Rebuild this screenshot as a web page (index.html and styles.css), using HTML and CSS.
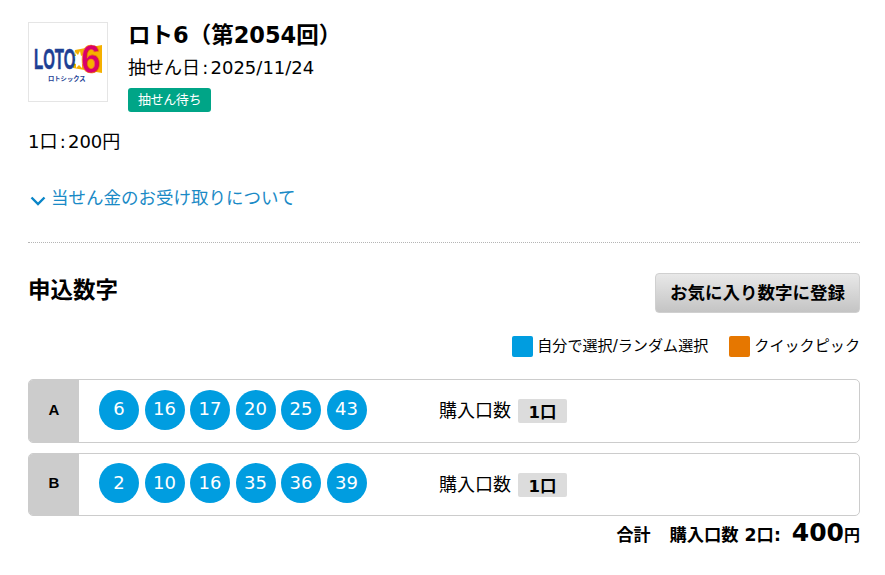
FILE: index.html
```html
<!DOCTYPE html>
<html lang="ja">
<head>
    <meta charset="UTF-8">
    <meta name="viewport" content="width=device-width, initial-scale=1.0">
    <title>ロト6 申込内容</title>
    <link rel="stylesheet" href="styles.css">
</head>
<body>
    <div class="page">
        <!-- くじ情報 -->
        <div class="lot-head">
            <div class="lot-logo">
                <svg width="68" height="48" viewBox="0 -5 68 48">
                    <polygon points="41,7 68,2 68,30 39,25" fill="#f5b000"/>
                    <polygon points="41,9 44,12 46,8 47,13 51,11 49,15 53,16 49,18 52,21 48,21 48,25 45,22 42,25 42,21 39,20 41,17 39,13 42,13" fill="#fff"/>
                    <text class="logo-loto" transform="translate(0 26) scale(1 2)">LOTO</text>
                    <text class="logo-six" transform="translate(47 30) scale(0.88 1)">6</text>
                    <text class="logo-kana" x="14" y="38">ロトシックス</text>
                </svg>
            </div>
            <div class="lot-info">
                <h1>ロト6（第2054回）</h1>
                <p class="draw-date">抽せん日 : 2025/11/24</p>
                <span class="status-badge">抽せん待ち</span>
            </div>
        </div>

        <p class="unit-price">1口 : 200円</p>

        <a class="prize-link" href="#">
            <svg width="16" height="10" viewBox="0 0 16 10"><path d="M1.5 1.5 8 8l6.5-6.5" fill="none" stroke="#0a85c7" stroke-width="2.4"/></svg>
            当せん金のお受け取りについて
        </a>

        <div class="divider"></div>

        <!-- 申込数字 -->
        <div class="section-head">
            <h2>申込数字</h2>
            <button class="fav-button" type="button">お気に入り数字に登録</button>
        </div>

        <div class="legend">
            <span class="legend-item"><i class="swatch swatch-blue"></i>自分で選択/ランダム選択</span>
            <span class="legend-item"><i class="swatch swatch-orange"></i>クイックピック</span>
        </div>

        <div class="entry-row">
            <div class="entry-label">A</div>
            <div class="balls">
                <span class="ball">6</span>
                <span class="ball">16</span>
                <span class="ball">17</span>
                <span class="ball">20</span>
                <span class="ball">25</span>
                <span class="ball">43</span>
            </div>
            <div class="qty">購入口数<span class="qty-value">1口</span></div>
        </div>

        <div class="entry-row">
            <div class="entry-label">B</div>
            <div class="balls">
                <span class="ball">2</span>
                <span class="ball">10</span>
                <span class="ball">16</span>
                <span class="ball">35</span>
                <span class="ball">36</span>
                <span class="ball">39</span>
            </div>
            <div class="qty">購入口数<span class="qty-value">1口</span></div>
        </div>

        <div class="total">
            <span class="total-label">合計</span>
            <span class="total-count">購入口数 2口:</span>
            <span class="total-price"><b>400</b>円</span>
        </div>
    </div>
</body>
</html>
```

FILE: styles.css
```css
/* Base */
body {
    font-family: "DejaVu Sans", "Noto Sans CJK JP", sans-serif;
    margin: 0;
    background-color: #fff;
    color: #000;
    font-size: 18px;
}

.page {
    padding: 22px 25px 0 28px;
}

/* Lottery info */
.lot-head {
    display: flex;
    gap: 20px;
}

.lot-logo {
    width: 80px;
    height: 80px;
    box-sizing: border-box;
    border: 1px solid #e5e5e5;
    display: flex;
    align-items: center;
    justify-content: center;
}

.logo-loto {
    font-family: "Liberation Sans", sans-serif;
    font-weight: bold;
    font-size: 15px;
    fill: #1d3f94;
    stroke: #1d3f94;
    stroke-width: 0.3px;
}

.logo-six {
    font-family: "Liberation Sans", sans-serif;
    font-weight: bold;
    font-size: 40px;
    fill: #d9006c;
    stroke: #f08000;
    stroke-width: 0.6px;
}

.logo-kana {
    font-family: "Noto Sans CJK JP", sans-serif;
    font-weight: bold;
    font-size: 6.3px;
    fill: #1d3f94;
}

.lot-info h1 {
    font-size: 22.5px;
    line-height: 24px;
    margin: 1px 0 0;
}

.draw-date {
    margin: 9px 0 0;
    line-height: 24px;
    word-spacing: -3.5px;
}

.status-badge {
    display: inline-block;
    margin-top: 8px;
    background-color: #00a587;
    color: #fff;
    font-size: 13px;
    letter-spacing: -0.4px;
    line-height: 24px;
    padding: 0 10px;
    border-radius: 3px;
}

.unit-price {
    margin: 18px 0 0;
    line-height: 24px;
    word-spacing: -3.5px;
}

.prize-link {
    display: flex;
    align-items: center;
    gap: 5px;
    margin-top: 32px;
    padding-left: 2px;
    font-size: 17.5px;
    line-height: 24px;
    color: #1a8ac6;
    text-decoration: none;
}

.prize-link svg {
    margin-top: 5px;
}

.divider {
    margin-top: 32px;
    border-top: 1px dotted #b5b5b5;
}

/* Numbers */
.section-head {
    display: flex;
    justify-content: space-between;
    margin-top: 30px;
}

.section-head h2 {
    font-size: 22.5px;
    line-height: 34px;
    margin: 0;
}

.fav-button {
    width: 205px;
    height: 40px;
    border: 1px solid #d0d0d0;
    border-radius: 4px;
    background: linear-gradient(#e8e8e8, #c4c4c4);
    font-family: inherit;
    font-size: 17.5px;
    font-weight: bold;
    color: #000;
    padding: 0 0 3px;
}

.legend {
    display: flex;
    justify-content: flex-end;
    gap: 21px;
    margin-top: 23px;
    font-size: 15.1px;
}

.legend-item {
    display: flex;
    align-items: center;
    gap: 4px;
    line-height: 21px;
}

.swatch {
    width: 21px;
    height: 21px;
    border-radius: 2px;
}

.swatch-blue {
    background-color: #009de0;
}

.swatch-orange {
    background-color: #e67700;
}

.entry-row {
    display: flex;
    align-items: center;
    box-sizing: border-box;
    height: 64px;
    margin-top: 22px;
    border: 1px solid #ccc;
    border-radius: 5px;
    overflow: hidden;
}

.entry-row + .entry-row {
    margin-top: 10px;
    height: 63px;
}

.entry-label {
    align-self: stretch;
    width: 50px;
    padding-bottom: 4px;
    box-sizing: border-box;
    background-color: #ccc;
    display: flex;
    align-items: center;
    justify-content: center;
    font-family: "Liberation Sans", sans-serif;
    font-size: 15px;
    font-weight: bold;
}

.balls {
    display: flex;
    gap: 5.5px;
    margin-left: 20px;
    margin-top: -3px;
}

.ball {
    width: 40px;
    height: 40px;
    box-sizing: border-box;
    padding-bottom: 2px;
    border-radius: 50%;
    background-color: #009de0;
    color: #fff;
    font-size: 18px;
    display: flex;
    align-items: center;
    justify-content: center;
}

.qty {
    display: flex;
    align-items: center;
    gap: 7px;
    margin-left: 72.5px;
    margin-top: -4px;
}

.qty-value {
    width: 49px;
    height: 24px;
    margin-top: 4px;
    background-color: #dcdcdc;
    border-radius: 2px;
    font-size: 16.5px;
    font-weight: bold;
    display: flex;
    align-items: center;
    justify-content: center;
}

/* Total */
.total {
    display: flex;
    justify-content: flex-end;
    align-items: baseline;
    gap: 19px;
    margin-top: 2px;
    font-size: 17px;
    font-weight: bold;
}

.total-count {
    margin-right: -8px;
    font-size: 17.3px;
}

.total-price {
    font-size: 16px;
}

.total-price b {
    font-size: 25px;
}
```
